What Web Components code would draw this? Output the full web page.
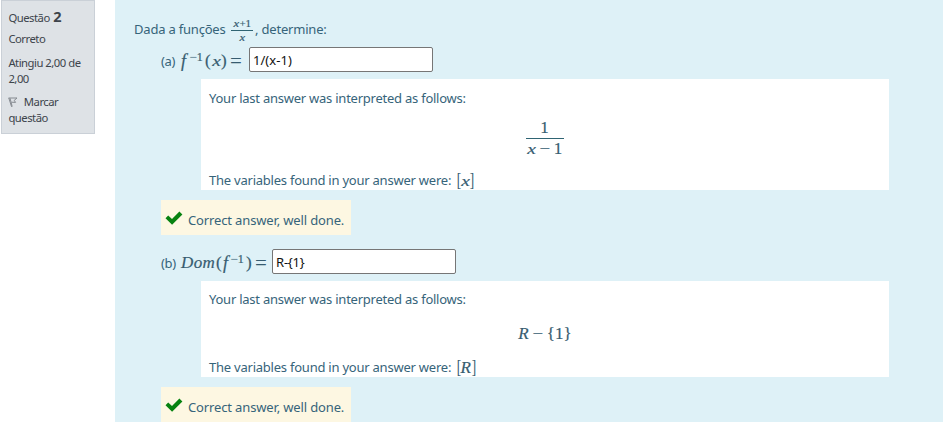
<!DOCTYPE html>
<html lang="pt"><head><meta charset="utf-8"><title>Questão 2</title>
<style>
body{margin:0;background:#fff;width:943px;height:422px;overflow:hidden;font-family:"Noto Sans","Open Sans",sans-serif}
</style></head><body>
<quiz-question></quiz-question>
<script>
const define=(name,html)=>customElements.define(name,class extends HTMLElement{
  constructor(){super();const t=document.createElement('template');t.innerHTML=html;
    this.attachShadow({mode:'open'}).append(t.content.cloneNode(true));}
});

define('math-text',`<style>
:host{display:inline-block;font:17px/20px "Liberation Serif",serif;letter-spacing:0;white-space:nowrap;color:#365c70;-webkit-text-stroke:.2px #365c70}
</style><slot></slot>`);

define('math-frac',`<style>
:host{display:inline-flex;flex-direction:column;align-items:center;color:#2f6473}
.bar{align-self:stretch;height:1px;background:#2f6473}
</style><slot name="num"></slot><span class="bar"></span><slot name="den"></slot>`);

define('question-info',`<style>
:host{display:block;box-sizing:border-box;width:94px;height:134px;margin-left:1px;border:1px solid #cad0d7;background:#dee2e6;padding:8px 0 0 6.4px;color:#3d444b;font-size:11.3px;line-height:16px;letter-spacing:-.5px;white-space:nowrap}
div{height:16px;margin-bottom:6px}
.two{height:32px;margin-bottom:7px}
.state{margin-bottom:8px}
b{font-size:14.5px;line-height:14px;margin-left:1px}
svg{width:10px;height:10px;margin-right:3px;vertical-align:-1px}
</style>
<div>Questão <b>2</b></div><div class="state">Correto</div>
<div class="two">Atingiu 2,00 de<br>2,00</div>
<div class="two"><svg viewBox="0 0 10 10" fill="none" stroke="#858a90"><path d="M.5 1H9L6.2 3.4 7.6 5.4 3.4 5.2M.8 1 3.6 9.8M2 1.2 4.2 9.6"/></svg> Marcar<br>questão</div>`);

define('answer-field',`<style>
:host{display:block;box-sizing:border-box;width:184px;height:25px;border:1px solid #767676;border-radius:2px;background:#fff;color:#111;font-size:13px;line-height:25px;padding-left:3px;letter-spacing:var(--ls,.05px)}
</style><slot></slot>`);

define('answer-row',`<style>
:host{display:flex;height:25px;align-items:flex-start}
.label{box-sizing:border-box;flex:none;line-height:28px;font-size:13px;letter-spacing:-.3px;width:20px}
.math{display:flex;flex:none;padding-top:4px;height:20px}
</style><span class="label"><slot name="label"></slot></span><span class="math"><slot name="math"></slot></span><slot></slot>`);

define('validation-panel',`<style>
:host{display:flex;flex-direction:column;box-sizing:border-box;width:688px;margin-left:40px;padding:9px 8px 0;background:#fff}
.line{line-height:20px;height:20px;flex:none;white-space:nowrap;display:flex}
.first{letter-spacing:-.24px} .vars{letter-spacing:-.23px;width:242px}
.formula{flex:1;display:flex;justify-content:center;align-items:flex-start}
</style><div class="line first">Your last answer was interpreted as follows:</div>
<div class="formula"><slot name="formula"></slot></div>
<div class="line"><span class="vars">The variables found in your answer were:</span><slot name="vars"></slot></div>`);

define('answer-feedback',`<style>
:host{display:flex;box-sizing:border-box;width:190px;height:35px;margin-top:10px;background:#fdf7e2;padding:0 0 0 4px;line-height:40px;white-space:nowrap;letter-spacing:-.14px}
svg{width:18px;height:16px;margin:10px 5px 0 0}
</style><svg viewBox="0 0 18 16"><path fill="#078210" d="M.5 8.2 3.2 5.5 7 9 14.4 1.6 17.4 4.4 7.1 14.8Z"/></svg><span><slot></slot></span>`);

define('quiz-question',`<style>
:host{display:flex;align-items:flex-start;width:943px;height:422px}
main{box-sizing:border-box;width:828px;height:422px;margin-left:20px;background:#def1f7;padding:18px 0 0 19px;color:#36647a;font-size:13px;overflow:hidden}
.intro{height:29px;display:flex;line-height:23px;letter-spacing:-.2px;white-space:nowrap}
.intro math-frac{width:22px;margin:-1px 2px 0 5px;height:27px}
.parts{padding-left:27px}
.i{font-style:italic} .s{font-size:12px;line-height:12px}
.t{font-size:11px;line-height:13px}
.xx{display:inline-block;font-style:italic;font-size:.92em;transform:scaleX(1.25);margin:0 1px}
.eq{font-size:21px;-webkit-text-stroke:0}
.op{display:inline-block;transform:scaleX(1.15);-webkit-text-stroke:0}
.br{font-size:19px;font-weight:400;-webkit-text-stroke:0;display:inline-block;transform:scaleX(.7);width:4.5px}
math-text{flex:none}
</style>
<question-info></question-info>
<main>
<div class="intro"><span style="width:92px">Dada a funções</span><math-frac><math-text slot="num" class="t"><span class="xx">x</span>+1</math-text><math-text slot="den" class="t"><span class="xx">x</span></math-text></math-frac><span>, determine:</span></div>
<div class="parts">
<answer-row><span slot="label">(a)</span>
<math-text slot="math" class="i" style="width:9px;font-size:18px">f</math-text><math-text slot="math" class="s" style="width:15px"><span class="op">−</span>1</math-text><math-text slot="math" style="width:6px">(</math-text><math-text slot="math" style="width:10px;text-align:center"><span class="xx">x</span></math-text><math-text slot="math" style="width:9px">)</math-text><math-text slot="math" class="eq" style="width:19px">=</math-text>
<answer-field>1/(x-1)</answer-field></answer-row>
<validation-panel style="height:111px;margin-top:7px">
<math-frac slot="formula" style="width:38px;margin:10px 1px 0 0"><math-text slot="num" style="line-height:19px;padding-bottom:1px">1</math-text><math-text slot="den"><span class="xx">x</span> <span class="op">−</span> 1</math-text></math-frac>
<math-text slot="vars" style="margin-left:5px"><span class="br">[</span><span class="xx">x</span><span class="br">]</span></math-text></validation-panel>
<answer-feedback>Correct answer, well done.</answer-feedback>
<answer-row style="margin-top:14px"><span slot="label">(b)</span>
<math-text slot="math" class="i" style="width:35px;letter-spacing:.4px">Dom</math-text><math-text slot="math" style="width:7px">(</math-text><math-text slot="math" class="i" style="width:8px;font-size:18px">f</math-text><math-text slot="math" class="s" style="width:15px"><span class="op">−</span>1</math-text><math-text slot="math" style="width:9px">)</math-text><math-text slot="math" class="eq" style="width:17px">=</math-text>
<answer-field style="--ls:-.2px">R-{1}</answer-field></answer-row>
<validation-panel style="height:96px;margin-top:7px;padding-top:8px">
<math-text slot="formula" style="margin-top:15px"><i>R</i> <span class="op">−</span> {1}</math-text>
<math-text slot="vars" style="margin-left:5px"><span class="br">[</span><i>R</i><span class="br">]</span></math-text></validation-panel>
<answer-feedback>Correct answer, well done.</answer-feedback>
</div></main>`);
</script></body></html>
